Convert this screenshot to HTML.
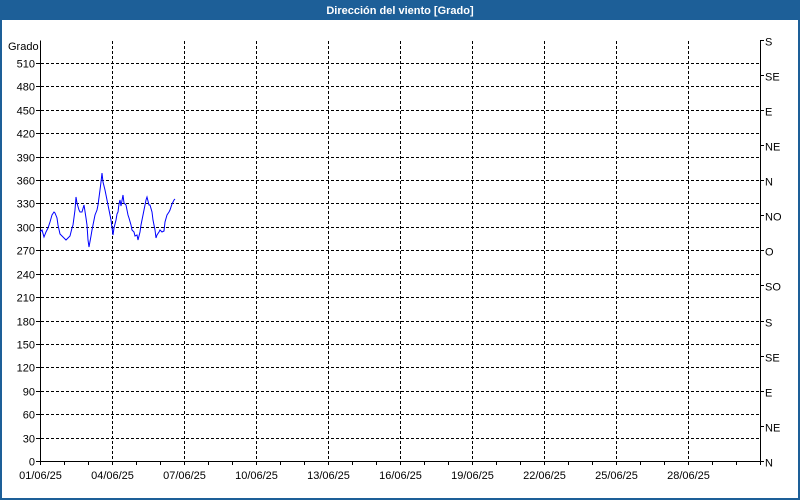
<!DOCTYPE html>
<html><head><meta charset="utf-8"><style>
body{margin:0;width:800px;height:500px;overflow:hidden;background:#fff;font-family:"Liberation Sans","DejaVu Sans",sans-serif}
</style></head><body>
<svg width="800" height="500" xmlns="http://www.w3.org/2000/svg" style="position:absolute;left:0;top:0" font-family="Liberation Sans, DejaVu Sans, sans-serif" font-size="11">
<rect x="0" y="0" width="800" height="500" fill="#fff"/>
<rect x="0" y="0" width="800" height="20" fill="#1d5f98"/>
<rect x="0" y="0" width="2" height="500" fill="#1d5f98"/>
<rect x="798" y="0" width="2" height="500" fill="#1d5f98"/>
<rect x="0" y="498" width="800" height="2" fill="#1d5f98"/>
<text x="400" y="14" fill="#fff" font-weight="bold" text-anchor="middle" font-size="11">Dirección del viento [Grado]</text>
<g stroke="#000" stroke-width="1" stroke-dasharray="3,2" fill="none" id="grid"></g>
<g id="ylab" fill="#000" text-anchor="end"></g>
<g id="rlab" fill="#000"></g>
<g id="xlab" fill="#000" text-anchor="middle"></g>
<path d="M40.5 40.5 V461.5 H760.5 V40.5" stroke="#000" fill="none"/>
<text x="8" y="50" fill="#000">Grado</text>
<g id="ticks" stroke="#000"></g>
<polyline fill="none" stroke="#0000ff" stroke-width="1" points="40,232 42,230 44,237 46,232 48,228 50,222 52,215 54,212 55,213 57,218 58,225 60,234 62,236 64,238 66,240 68,238 70,236 72,228 73,225 75,210 76,197 77,203 79,210 80,212 82,212 84,205 86,218 87,225 88,240 89,247 91,236 92,230 94,220 95,215 97,210 98,205 100,190 101,182 102,173 103,182 105,190 107,200 108,205 110,215 111,220 113,235 114,228 116,220 117,214 118,212 119,204 120,200 121,206 123,195 124,203 126,205 128,215 129,218 131,225 132,230 134,232 135,236 137,235 138,240 140,232 141,225 143,215 144,210 146,200 147,197 149,205 150,205 152,212 153,220 155,230 156,238 157,235 159,232 160,230 162,232 164,231 165,222 167,215 169,212 170,210 172,204 174,200 175,199"/>
</svg>
<script>
var NS="http://www.w3.org/2000/svg";
function el(p,n,a,t){var e=document.createElementNS(NS,n);for(var k in a)e.setAttribute(k,a[k]);if(t!=null)e.textContent=t;document.getElementById(p).appendChild(e);}
var step=(461-63)/17;
for(var i=0;i<=17;i++){var y=Math.round(461-i*step)+0.5;
 if(i>0)el("grid","line",{x1:41,y1:y,x2:760,y2:y});
 el("ylab","text",{x:35,y:y+4},String(i*30));
 el("ticks","line",{x1:36,y1:y,x2:40,y2:y});}
var rl=["N","NE","E","SE","S","SO","O","NO","N","NE","E","SE","S"];
for(var j=0;j<13;j++){var y=Math.round(461-j*45/30*step)+0.5;
 el("rlab","text",{x:765,y:y+5},rl[j]);
 el("ticks","line",{x1:760,y1:y,x2:764,y2:y});}
var dates=["01/06/25","04/06/25","07/06/25","10/06/25","13/06/25","16/06/25","19/06/25","22/06/25","25/06/25","28/06/25"];
for(var d=0;d<=30;d++){var x=40+d*24+0.5;
 el("ticks","line",{x1:x,y1:461,x2:x,y2:465});
 if(d%3==0&&d<30){var k=d/3; if(d>0)el("grid","line",{x1:x,y1:41,x2:x,y2:461}); el("xlab","text",{x:x,y:479},dates[k]);}}
</script>
</body></html>
